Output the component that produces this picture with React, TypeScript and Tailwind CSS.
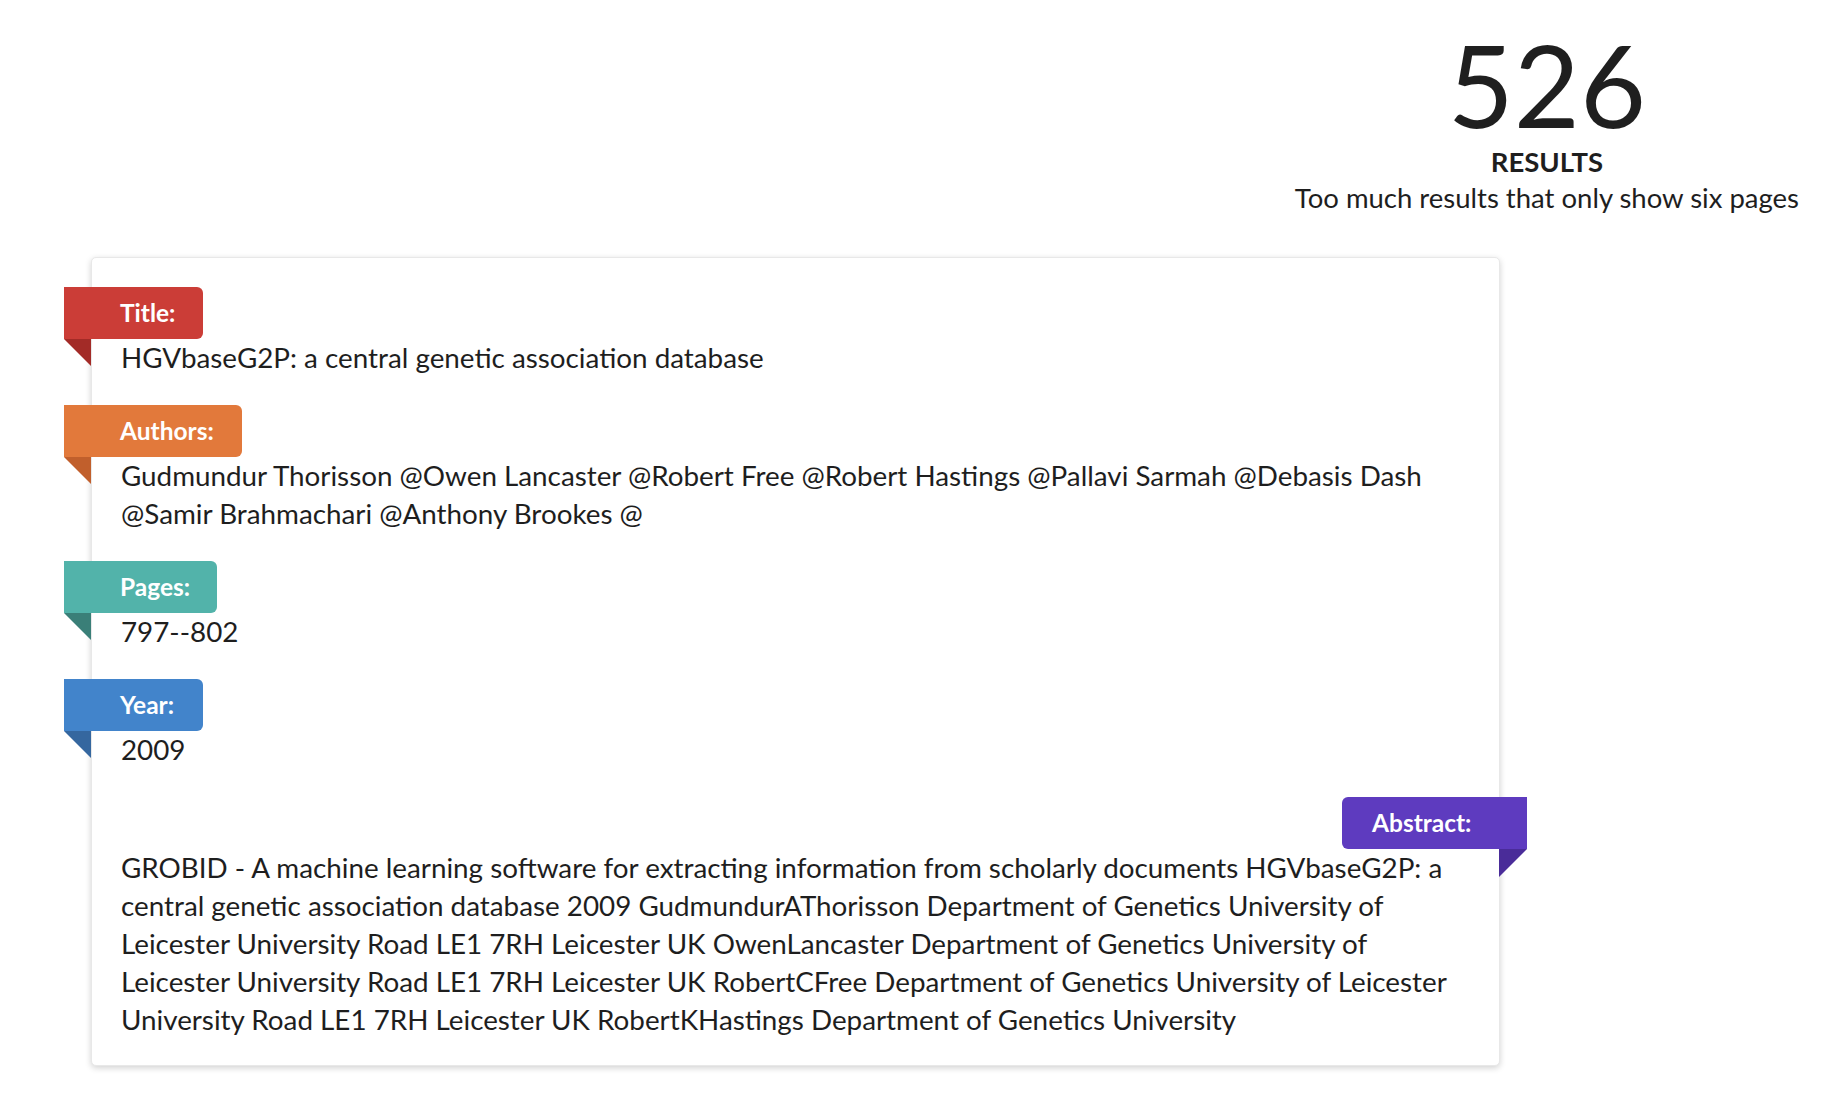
import React from "react"

type Ribbon = {
  label: string
  bg: string
  fold: string
  width: string
}

const sections: { ribbon: Ribbon; text: string }[] = [
  {
    ribbon: { label: "Title:", bg: "bg-[#cb3d37]", fold: "text-[#a32b27]", width: "w-[139px]" },
    text: "HGVbaseG2P: a central genetic association database",
  },
  {
    ribbon: { label: "Authors:", bg: "bg-[#e2793b]", fold: "text-[#c15f2c]", width: "w-[178px]" },
    text: "Gudmundur Thorisson @Owen Lancaster @Robert Free @Robert Hastings @Pallavi Sarmah @Debasis Dash @Samir Brahmachari @Anthony Brookes @",
  },
  {
    ribbon: { label: "Pages:", bg: "bg-[#52b3aa]", fold: "text-[#3a7f78]", width: "w-[153px]" },
    text: "797--802",
  },
  {
    ribbon: { label: "Year:", bg: "bg-[#4284cb]", fold: "text-[#35679f]", width: "w-[139px]" },
    text: "2009",
  },
]

const abstract =
  "GROBID - A machine learning software for extracting information from scholarly documents HGVbaseG2P: a central genetic association database 2009 GudmundurAThorisson Department of Genetics University of Leicester University Road LE1 7RH Leicester UK OwenLancaster Department of Genetics University of Leicester University Road LE1 7RH Leicester UK RobertCFree Department of Genetics University of Leicester University Road LE1 7RH Leicester UK RobertKHastings Department of Genetics University"

function LeftRibbon({ r }: { r: Ribbon }) {
  return (
    <div
      className={`relative -ml-[57px] h-[52px] ${r.width} ${r.bg} rounded-r-[6px] flex items-center pl-[56px] text-[24.5px] font-bold text-white leading-none`}
    >
      {r.label}
      <svg
        className={`absolute left-0 top-full ${r.fold}`}
        width="27"
        height="27"
        viewBox="0 0 27 27"
      >
        <polygon points="0,0 27,0 27,27" fill="currentColor" />
      </svg>
    </div>
  )
}

export default function App() {
  return (
    <div className="min-h-screen bg-white font-[Lato,sans-serif] text-[#1e1e1e]">
      <div className="flex justify-end pr-[35px]">
        <div className="flex flex-col items-center text-center">
          <div className="mt-[26px] text-[114px] leading-[115px] font-normal text-[#1f1f1f]">526</div>
          <div className="mt-[3px] text-[27.5px] leading-[36px] font-bold">RESULTS</div>
          <div className="text-[27.5px] leading-[36px]">Too much results that only show six pages</div>
        </div>
      </div>

      <div className="ml-[91px] mt-[41px] w-[1409px] rounded-[5px] bg-white border border-[#e8e8e8] shadow-[0_2px_6px_rgba(0,0,0,0.18)] pl-[29px] pr-[30px] pt-[29px] pb-[26px] text-[27.8px] leading-[38px]">
        {sections.map((s, i) => (
          <div key={s.ribbon.label} className={i === 0 ? "" : "mt-[28px]"}>
            <LeftRibbon r={s.ribbon} />
            <p>{s.text}</p>
          </div>
        ))}

        <div className="mt-[28px] flex flex-col">
          <div className="relative self-end -mr-[58px] h-[52px] w-[185px] bg-[#5e3bbf] rounded-l-[6px] flex items-center pl-[30px] text-[24.5px] font-bold text-white leading-none">
            Abstract:
            <svg
              className="absolute right-0 top-full text-[#4a2c99]"
              width="28"
              height="28"
              viewBox="0 0 28 28"
            >
              <polygon points="0,0 28,0 0,28" fill="currentColor" />
            </svg>
          </div>
          <p>{abstract}</p>
        </div>
      </div>
    </div>
  )
}
